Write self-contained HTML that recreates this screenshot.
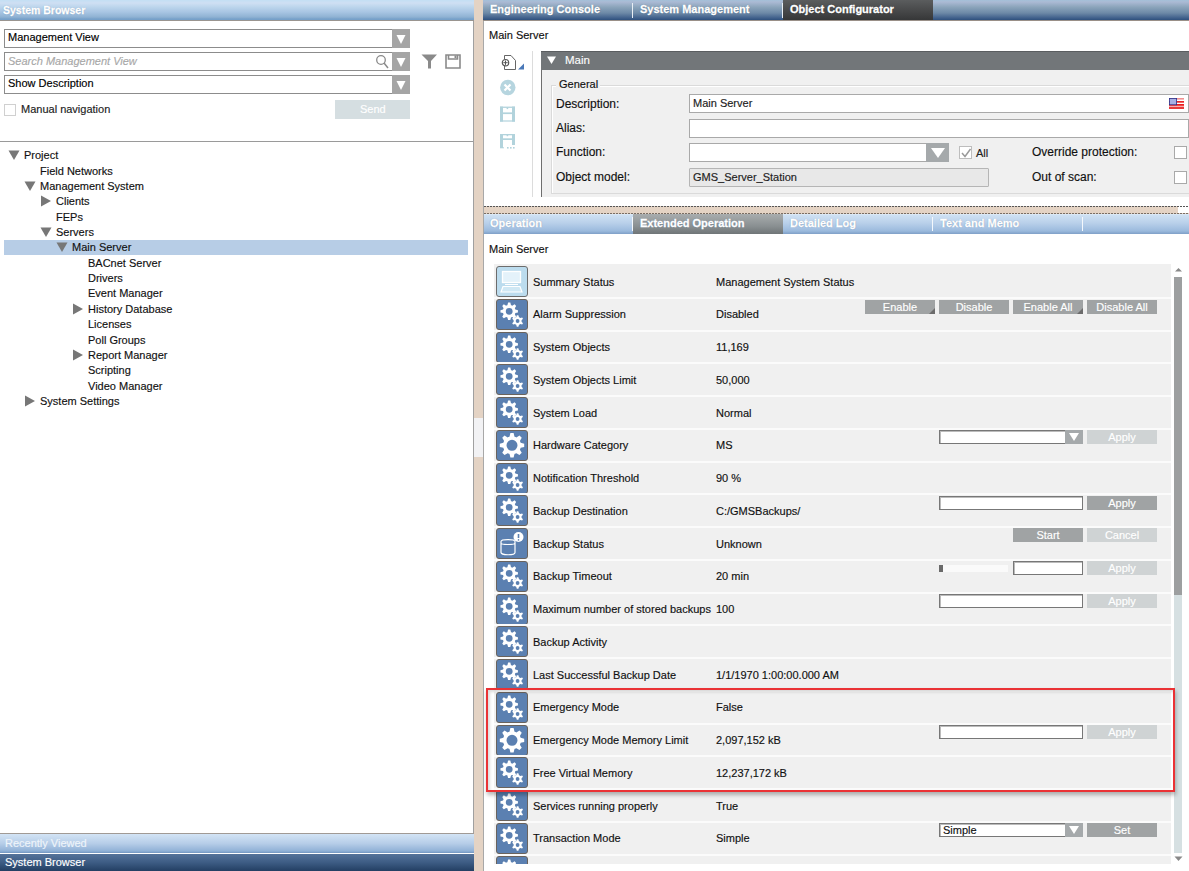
<!DOCTYPE html><html><head><meta charset="utf-8"><style>
html,body{margin:0;padding:0;}
body{width:1189px;height:871px;position:relative;overflow:hidden;background:#fff;font-family:"Liberation Sans",sans-serif;}
.t{position:absolute;white-space:nowrap;-webkit-text-stroke:0.15px currentColor;}
.r{position:absolute;box-sizing:border-box;}

</style></head><body>
<div class="r" style="left:0px;top:0px;width:474px;height:20px;background:linear-gradient(#c3dff4 0px,#cfdff3 3px,#bcd5ec 7px,#a8c5e3 12px,#8fb2d3 17px,#76a0c9 19px);"></div>
<div class="r" style="left:0px;top:20px;width:474px;height:1px;background:#9a9590;"></div>
<div class="t" style="left:3px;top:4.50px;font-size:10.5px;line-height:11.73px;color:#fff;font-weight:bold;font-style:normal;-webkit-text-stroke:0.3px #fff;text-shadow:0 0 1px #5d7fa5;">System Browser</div>
<div class="r" style="left:473px;top:21px;width:1px;height:850px;background:#a0a0a0;"></div>
<div class="r" style="left:4px;top:29px;width:406px;height:19px;border:1px solid #8c8c8c;border-right:none;background:#fff;"></div>
<div class="r" style="left:392px;top:29px;width:18px;height:19px;background:#a5a5a5;"></div>
<svg style="position:absolute;left:395.0px;top:33.5px" width="12" height="11"><path d="M1.5,1 L10.5,1 L6,10Z" fill="#fff"/></svg>
<div class="t" style="left:8px;top:31.05px;font-size:11px;line-height:12.29px;color:#000;font-weight:normal;font-style:normal;">Management View</div>
<div class="r" style="left:4px;top:52px;width:406px;height:19px;border:1px solid #8c8c8c;border-right:none;background:#fff;"></div>
<div class="r" style="left:392px;top:52px;width:18px;height:19px;background:#a5a5a5;"></div>
<svg style="position:absolute;left:395.0px;top:56.5px" width="12" height="11"><path d="M1.5,1 L10.5,1 L6,10Z" fill="#fff"/></svg>
<div class="t" style="left:8px;top:55.25px;font-size:11px;line-height:12.29px;color:#a8a8a8;font-weight:normal;font-style:italic;">Search Management View</div>
<div class="r" style="left:4px;top:75px;width:406px;height:19px;border:1px solid #8c8c8c;border-right:none;background:#fff;"></div>
<div class="r" style="left:392px;top:75px;width:18px;height:19px;background:#a5a5a5;"></div>
<svg style="position:absolute;left:395.0px;top:79.5px" width="12" height="11"><path d="M1.5,1 L10.5,1 L6,10Z" fill="#fff"/></svg>
<div class="t" style="left:8px;top:77.05px;font-size:11px;line-height:12.29px;color:#000;font-weight:normal;font-style:normal;">Show Description</div>
<svg style="position:absolute;left:375px;top:54px" width="15" height="16"><circle cx="6" cy="6" r="4.3" fill="none" stroke="#8a8a8a" stroke-width="1.3"/><path d="M9,9 L13,14" stroke="#8a8a8a" stroke-width="1.5"/></svg>
<svg style="position:absolute;left:421px;top:54px" width="17" height="15"><path d="M0.5,0.5 L16,0.5 L10,7 L10,14.5 L7,14.5 L7,7Z" fill="#8a8a8a"/></svg>
<svg style="position:absolute;left:445px;top:54px" width="17" height="15"><path d="M1,1 H15 V14 H1Z M3.5,1 V5 H12.5 V1" fill="none" stroke="#8a8a8a" stroke-width="1.6"/><rect x="9.5" y="1.5" width="2" height="2.5" fill="#8a8a8a"/></svg>
<div class="r" style="left:4px;top:104px;width:12px;height:12px;border:1px solid #d0d0d0;background:#fff;"></div>
<div class="t" style="left:21px;top:102.75px;font-size:11px;line-height:12.29px;color:#222;font-weight:normal;font-style:normal;">Manual navigation</div>
<div class="r" style="left:335px;top:100px;width:75px;height:19px;background:#d5dee1;"></div>
<div class="t" style="left:360px;top:103.05px;font-size:11px;line-height:12.29px;color:#fff;font-weight:normal;font-style:normal;">Send</div>
<div class="r" style="left:0px;top:141px;width:473px;height:1px;background:#9a9a9a;"></div>
<svg style="position:absolute;left:8px;top:149.1px" width="12" height="12"><path d="M0.5,1.5 L11.5,1.5 L6,11Z" fill="#777"/></svg>
<div class="t" style="left:24px;top:149.14px;font-size:11px;line-height:12.29px;color:#111;font-weight:normal;font-style:normal;">Project</div>
<div class="t" style="left:40px;top:164.51px;font-size:11px;line-height:12.29px;color:#111;font-weight:normal;font-style:normal;">Field Networks</div>
<svg style="position:absolute;left:24px;top:179.8px" width="12" height="12"><path d="M0.5,1.5 L11.5,1.5 L6,11Z" fill="#777"/></svg>
<div class="t" style="left:40px;top:179.88px;font-size:11px;line-height:12.29px;color:#111;font-weight:normal;font-style:normal;">Management System</div>
<svg style="position:absolute;left:40px;top:195.2px" width="12" height="12"><path d="M1,0.5 L1,11.5 L11,6Z" fill="#777"/></svg>
<div class="t" style="left:56px;top:195.25px;font-size:11px;line-height:12.29px;color:#111;font-weight:normal;font-style:normal;">Clients</div>
<div class="t" style="left:56px;top:210.62px;font-size:11px;line-height:12.29px;color:#111;font-weight:normal;font-style:normal;">FEPs</div>
<svg style="position:absolute;left:40px;top:225.9px" width="12" height="12"><path d="M0.5,1.5 L11.5,1.5 L6,11Z" fill="#777"/></svg>
<div class="t" style="left:56px;top:225.99px;font-size:11px;line-height:12.29px;color:#111;font-weight:normal;font-style:normal;">Servers</div>
<div class="r" style="left:4px;top:240px;width:464px;height:15px;background:#b7cde6;"></div>
<svg style="position:absolute;left:56px;top:241.3px" width="12" height="12"><path d="M0.5,1.5 L11.5,1.5 L6,11Z" fill="#777"/></svg>
<div class="t" style="left:72px;top:241.36px;font-size:11px;line-height:12.29px;color:#111;font-weight:normal;font-style:normal;">Main Server</div>
<div class="t" style="left:88px;top:256.74px;font-size:11px;line-height:12.29px;color:#111;font-weight:normal;font-style:normal;">BACnet Server</div>
<div class="t" style="left:88px;top:272.11px;font-size:11px;line-height:12.29px;color:#111;font-weight:normal;font-style:normal;">Drivers</div>
<div class="t" style="left:88px;top:287.47px;font-size:11px;line-height:12.29px;color:#111;font-weight:normal;font-style:normal;">Event Manager</div>
<svg style="position:absolute;left:72px;top:302.8px" width="12" height="12"><path d="M1,0.5 L1,11.5 L11,6Z" fill="#777"/></svg>
<div class="t" style="left:88px;top:302.84px;font-size:11px;line-height:12.29px;color:#111;font-weight:normal;font-style:normal;">History Database</div>
<div class="t" style="left:88px;top:318.21px;font-size:11px;line-height:12.29px;color:#111;font-weight:normal;font-style:normal;">Licenses</div>
<div class="t" style="left:88px;top:333.58px;font-size:11px;line-height:12.29px;color:#111;font-weight:normal;font-style:normal;">Poll Groups</div>
<svg style="position:absolute;left:72px;top:348.9px" width="12" height="12"><path d="M1,0.5 L1,11.5 L11,6Z" fill="#777"/></svg>
<div class="t" style="left:88px;top:348.95px;font-size:11px;line-height:12.29px;color:#111;font-weight:normal;font-style:normal;">Report Manager</div>
<div class="t" style="left:88px;top:364.32px;font-size:11px;line-height:12.29px;color:#111;font-weight:normal;font-style:normal;">Scripting</div>
<div class="t" style="left:88px;top:379.69px;font-size:11px;line-height:12.29px;color:#111;font-weight:normal;font-style:normal;">Video Manager</div>
<svg style="position:absolute;left:24px;top:395.0px" width="12" height="12"><path d="M1,0.5 L1,11.5 L11,6Z" fill="#777"/></svg>
<div class="t" style="left:40px;top:395.06px;font-size:11px;line-height:12.29px;color:#111;font-weight:normal;font-style:normal;">System Settings</div>
<div class="r" style="left:0px;top:833px;width:474px;height:1px;background:#a09a95;"></div>
<div class="r" style="left:0px;top:834px;width:474px;height:19px;background:linear-gradient(#d3e4f5,#b6cde8 50%,#90b1d6 90%,#7195c0);"></div>
<div class="r" style="left:0px;top:853px;width:474px;height:1px;background:#fff;"></div>
<div class="r" style="left:0px;top:854px;width:474px;height:17px;background:linear-gradient(#55739a,#3d5c84 50%,#233f63);"></div>
<div class="t" style="left:5px;top:837.04px;font-size:11px;line-height:12.29px;color:#eef4fa;font-weight:normal;font-style:normal;">Recently Viewed</div>
<div class="t" style="left:5px;top:856.04px;font-size:11px;line-height:12.29px;color:#fff;font-weight:normal;font-style:normal;">System Browser</div>
<div class="r" style="left:474px;top:0px;width:9px;height:871px;background:#e4d3c4;"></div>
<div class="r" style="left:474px;top:418px;width:9px;height:39px;background:#f2f2f4;"></div>
<div class="r" style="left:483px;top:21px;width:1px;height:850px;background:#a8a8a8;"></div>
<div class="r" style="left:483px;top:0px;width:706px;height:20px;background:linear-gradient(#a3c0d9 0px,#abbad4 2px,#8ba4bb 7px,#6d89a7 13px,#40608b 18px,#2e507d 20px);"></div>
<div class="r" style="left:483px;top:20px;width:706px;height:1px;background:#9a9088;"></div>
<div class="r" style="left:783px;top:0px;width:150px;height:20px;background:linear-gradient(#5b5d5e,#454647 60%,#363738);"></div>
<div class="r" style="left:632px;top:3px;width:1px;height:15px;background:#e8eef4;"></div>
<div class="r" style="left:782px;top:3px;width:1px;height:15px;background:#e8eef4;"></div>
<div class="t" style="left:490px;top:3.04px;font-size:11px;line-height:12.29px;color:#fff;font-weight:bold;font-style:normal;-webkit-text-stroke:0.3px #fff;text-shadow:0 0 1px #2a4466;">Engineering Console</div>
<div class="t" style="left:640px;top:3.04px;font-size:11px;line-height:12.29px;color:#fff;font-weight:bold;font-style:normal;-webkit-text-stroke:0.3px #fff;text-shadow:0 0 1px #2a4466;">System Management</div>
<div class="t" style="left:790px;top:3.04px;font-size:11px;line-height:12.29px;color:#fff;font-weight:bold;font-style:normal;-webkit-text-stroke:0.3px #fff;text-shadow:0 0 1px #222;">Object Configurator</div>
<div class="t" style="left:489px;top:29.05px;font-size:11px;line-height:12.29px;color:#111;font-weight:normal;font-style:normal;">Main Server</div>
<svg style="position:absolute;left:496px;top:53px" width="30" height="18"><path d="M8.5,6 V2.5 H15 L19.5,7.5 V16.5 H8.5 V13" fill="none" stroke="#555" stroke-width="0.9"/><circle cx="9.5" cy="9.7" r="3.2" fill="#fff" stroke="#555" stroke-width="1.2"/><path d="M7.3,9.7 H11.7 M9.5,7.5 V11.9" stroke="#555" stroke-width="1"/><path d="M28,10.5 V16.5 H22Z" fill="#4a78b8"/></svg>
<svg style="position:absolute;left:499px;top:79px" width="18" height="18"><circle cx="8.8" cy="8.5" r="7.7" fill="#b6d5df"/><path d="M5.5,5.5 L11.5,11.5 M11.5,5.5 L5.5,11.5" stroke="#fff" stroke-width="2.2"/></svg>
<svg style="position:absolute;left:499px;top:106px" width="18" height="17" fill="#b2d3dc"><rect x="1" y="0.6" width="3" height="15" /><rect x="13" y="0.6" width="3" height="15"/><rect x="1" y="0.6" width="15" height="1.3"/><rect x="4" y="6.4" width="9" height="1.7"/><rect x="1" y="14.4" width="15" height="1.2"/><rect x="7.6" y="1.5" width="1.6" height="1.6"/></svg>
<svg style="position:absolute;left:499px;top:133px" width="18" height="17" fill="#b2d3dc"><rect x="1" y="1" width="3" height="14" /><rect x="13" y="1" width="3" height="11"/><rect x="1" y="1" width="15" height="1.3"/><rect x="4" y="5.3" width="9" height="1.7"/><rect x="1" y="14.3" width="4" height="1"/><rect x="8" y="14" width="1.6" height="1.6"/><rect x="11" y="14" width="1.6" height="1.6"/><rect x="14" y="14" width="1.6" height="1.6"/><rect x="7.6" y="1.8" width="1.6" height="1.4"/></svg>
<div class="r" style="left:532px;top:51px;width:1px;height:154px;background:#dcdcdc;"></div>
<div class="r" style="left:541px;top:51px;width:648px;height:19px;background:#727679;border-top:1px solid #5a5d60;"></div>
<svg style="position:absolute;left:546px;top:55px" width="12" height="11"><path d="M1,1.5 L10,1.5 L5.5,9Z" fill="#fff"/></svg>
<div class="t" style="left:565px;top:53.59px;font-size:11.5px;line-height:12.85px;color:#fbfbfb;font-weight:normal;font-style:normal;">Main</div>
<div class="r" style="left:541px;top:70px;width:648px;height:127px;background:#f0f0f0;border-left:1px solid #6e6e6e;"></div>
<div class="r" style="left:551px;top:85px;width:640px;height:109px;border:1px solid #dadada;border-right:none;box-shadow:inset 1px 1px 0 #fff;"></div>
<div class="r" style="left:556px;top:79px;width:44px;height:10px;background:#f0f0f0;"></div>
<div class="t" style="left:559px;top:78.34px;font-size:11px;line-height:12.29px;color:#111;font-weight:normal;font-style:normal;">General</div>
<div class="t" style="left:556px;top:97.84px;font-size:12px;line-height:13.40px;color:#111;font-weight:normal;font-style:normal;">Description:</div>
<div class="t" style="left:556px;top:121.84px;font-size:12px;line-height:13.40px;color:#111;font-weight:normal;font-style:normal;">Alias:</div>
<div class="t" style="left:556px;top:145.84px;font-size:12px;line-height:13.40px;color:#111;font-weight:normal;font-style:normal;">Function:</div>
<div class="t" style="left:556px;top:170.84px;font-size:12px;line-height:13.40px;color:#111;font-weight:normal;font-style:normal;">Object model:</div>
<div class="r" style="left:689px;top:94px;width:500px;height:19px;background:#fff;border:1px solid #a9a9a9;"></div>
<div class="t" style="left:693px;top:97.05px;font-size:11px;line-height:12.29px;color:#222;font-weight:normal;font-style:normal;">Main Server</div>
<div class="r" style="left:689px;top:119px;width:500px;height:19px;background:#fff;border:1px solid #a9a9a9;"></div>
<div class="r" style="left:689px;top:143px;width:260px;height:19px;background:#fff;border:1px solid #a9a9a9;"></div>
<div class="r" style="left:926px;top:143px;width:23px;height:19px;background:#a5a9ab;"></div>
<svg style="position:absolute;left:930px;top:147px" width="16" height="12"><path d="M1,1 L15,1 L8,11Z" fill="#fff"/></svg>
<div class="r" style="left:959px;top:146px;width:13px;height:13px;background:#fff;border:1px solid #bdbdbd;"></div>
<svg style="position:absolute;left:960px;top:147px" width="12" height="12"><path d="M2,6 L5,9.5 L10.5,2" fill="none" stroke="#9a9a9a" stroke-width="1.5"/></svg>
<div class="t" style="left:976px;top:147.04px;font-size:11px;line-height:12.29px;color:#222;font-weight:normal;font-style:normal;">All</div>
<div class="r" style="left:689px;top:168px;width:300px;height:19px;background:#e8e8e8;border:1px solid #b5b5b5;border-radius:1px;"></div>
<div class="t" style="left:693px;top:171.04px;font-size:11px;line-height:12.29px;color:#222;font-weight:normal;font-style:normal;">GMS_Server_Station</div>
<div class="t" style="left:1032px;top:145.94px;font-size:12px;line-height:13.40px;color:#111;font-weight:normal;font-style:normal;">Override protection:</div>
<div class="t" style="left:1032px;top:170.64px;font-size:12px;line-height:13.40px;color:#111;font-weight:normal;font-style:normal;">Out of scan:</div>
<div class="r" style="left:1174px;top:146px;width:13px;height:13px;background:#fff;border:1px solid #a9a9a9;"></div>
<div class="r" style="left:1174px;top:171px;width:13px;height:13px;background:#fff;border:1px solid #a9a9a9;"></div>
<svg style="position:absolute;left:1169px;top:98px" width="15" height="11"><rect x="0" y="0" width="15" height="11" fill="#fff"/><rect x="0" y="0" width="15" height="1.6" fill="#f09090"/><rect x="0" y="3" width="15" height="1.7" fill="#e82828"/><rect x="0" y="6" width="15" height="1.8" fill="#ee1c1c"/><rect x="0" y="8.6" width="15" height="2.4" fill="#e83a3a"/><rect x="0.4" y="0.4" width="7.2" height="6.4" fill="#a7b0e4" stroke="#28308a" stroke-width="0.8"/></svg>
<div class="r" style="left:484px;top:197px;width:705px;height:9px;background:#fff;"></div>
<div class="r" style="left:484px;top:206px;width:705px;height:8px;background:#e4d3c4;"></div>
<div class="r" style="left:1178px;top:206px;width:11px;height:7px;background:#fff;"></div>
<div class="r" style="left:484px;top:206px;width:705px;height:1px;background:repeating-linear-gradient(90deg,#555 0 2px,transparent 2px 3px);"></div>
<div class="r" style="left:484px;top:213px;width:705px;height:1px;background:repeating-linear-gradient(90deg,#7a6e64 0 2px,transparent 2px 3px);"></div>
<div class="r" style="left:484px;top:214px;width:705px;height:20px;background:linear-gradient(#e4eef8 0px,#cfe1f3 1px,#b9d0ea 45%,#9bbadd 85%,#7e9fc7);"></div>
<div class="r" style="left:633px;top:214px;width:150px;height:20px;background:linear-gradient(#a9adae,#8a9092 60%,#6f7577);"></div>
<div class="r" style="left:632px;top:217px;width:1px;height:14px;background:#f4f8fc;"></div>
<div class="r" style="left:932px;top:217px;width:1px;height:14px;background:#f4f8fc;"></div>
<div class="r" style="left:1082px;top:217px;width:1px;height:14px;background:#f4f8fc;"></div>
<div class="t" style="left:490px;top:217.04px;font-size:11px;line-height:12.29px;color:#fff;font-weight:bold;font-style:normal;-webkit-text-stroke:0.3px #fff;text-shadow:0 0 1px #4a6a93;">Operation</div>
<div class="t" style="left:640px;top:217.04px;font-size:11px;line-height:12.29px;color:#fff;font-weight:bold;font-style:normal;-webkit-text-stroke:0.3px #fff;text-shadow:0 0 1px #4a6a93;">Extended Operation</div>
<div class="t" style="left:790px;top:217.04px;font-size:11px;line-height:12.29px;color:#fff;font-weight:bold;font-style:normal;-webkit-text-stroke:0.3px #fff;text-shadow:0 0 1px #4a6a93;">Detailed Log</div>
<div class="t" style="left:940px;top:217.04px;font-size:11px;line-height:12.29px;color:#fff;font-weight:bold;font-style:normal;-webkit-text-stroke:0.3px #fff;text-shadow:0 0 1px #4a6a93;">Text and Memo</div>
<div class="t" style="left:489px;top:243.04px;font-size:11px;line-height:12.29px;color:#111;font-weight:normal;font-style:normal;">Main Server</div>
<div class="r" style="left:494px;top:264px;width:677px;height:600px;background:#f0f0f0;"></div>
<svg style="position:absolute;left:496px;top:266.1px" width="33" height="31"><rect x="0.5" y="0.5" width="31" height="30" rx="2.5" fill="#bcdcee" stroke="#6c6c6c"/><rect x="6.5" y="5.5" width="18" height="11" fill="#e4f2fa" stroke="#fff" stroke-width="1.3"/><path d="M9,18.5 H22" stroke="#fff" stroke-width="1"/><path d="M7,20.5 H24 L26,26 H5Z" fill="#d0e8f4" stroke="#fff" stroke-width="1.2"/></svg>
<div class="t" style="left:533px;top:275.55px;font-size:11px;line-height:12.29px;color:#111;font-weight:normal;font-style:normal;">Summary Status</div>
<div class="t" style="left:716px;top:275.55px;font-size:11px;line-height:12.29px;color:#111;font-weight:normal;font-style:normal;">Management System Status</div>
<div class="r" style="left:494px;top:297px;width:677px;height:2px;background:#fbfbfb;"></div>
<svg style="position:absolute;left:496px;top:298.85px" width="33" height="31"><rect x="0.5" y="0.5" width="31" height="30" rx="2.5" fill="#5b80b1" stroke="#6a635d"/><path d="M19.34,10.50 L21.93,11.20 L21.93,13.40 L19.34,14.10 L19.26,14.36 L19.16,14.62 L19.06,14.88 L18.94,15.13 L18.82,15.37 L20.15,17.70 L18.60,19.25 L16.27,17.92 L16.03,18.04 L15.78,18.16 L15.52,18.26 L15.26,18.36 L15.00,18.44 L14.30,21.03 L12.10,21.03 L11.40,18.44 L11.14,18.36 L10.88,18.26 L10.62,18.16 L10.37,18.04 L10.13,17.92 L7.80,19.25 L6.25,17.70 L7.58,15.37 L7.46,15.13 L7.34,14.88 L7.24,14.62 L7.14,14.36 L7.06,14.10 L4.47,13.40 L4.47,11.20 L7.06,10.50 L7.14,10.24 L7.24,9.98 L7.34,9.72 L7.46,9.47 L7.58,9.23 L6.25,6.90 L7.80,5.35 L10.13,6.68 L10.37,6.56 L10.62,6.44 L10.88,6.34 L11.14,6.24 L11.40,6.16 L12.10,3.57 L14.30,3.57 L15.00,6.16 L15.26,6.24 L15.52,6.34 L15.78,6.44 L16.03,6.56 L16.27,6.68 L18.60,5.35 L20.15,6.90 L18.82,9.23 L18.94,9.47 L19.06,9.72 L19.16,9.98 L19.26,10.24Z M16.60,12.30 A3.4,3.4 0 1,0 9.80,12.30 A3.4,3.4 0 1,0 16.60,12.30Z M23.00,25.75 L22.40,27.74 L20.80,27.74 L20.20,25.75 L19.95,25.65 L19.72,25.53 L19.49,25.40 L19.27,25.25 L19.06,25.09 L17.03,25.57 L16.23,24.18 L17.66,22.66 L17.62,22.40 L17.60,22.13 L17.60,21.87 L17.62,21.60 L17.66,21.34 L16.23,19.82 L17.03,18.43 L19.06,18.91 L19.27,18.75 L19.49,18.60 L19.72,18.47 L19.95,18.35 L20.20,18.25 L20.80,16.26 L22.40,16.26 L23.00,18.25 L23.25,18.35 L23.48,18.47 L23.71,18.60 L23.93,18.75 L24.14,18.91 L26.17,18.43 L26.97,19.82 L25.54,21.34 L25.58,21.60 L25.60,21.87 L25.60,22.13 L25.58,22.40 L25.54,22.66 L26.97,24.18 L26.17,25.57 L24.14,25.09 L23.93,25.25 L23.71,25.40 L23.48,25.53 L23.25,25.65Z M23.50,22.00 A1.9,1.9 0 1,0 19.70,22.00 A1.9,1.9 0 1,0 23.50,22.00Z" fill="#fff" fill-rule="evenodd"/></svg>
<div class="t" style="left:533px;top:308.30px;font-size:11px;line-height:12.29px;color:#111;font-weight:normal;font-style:normal;">Alarm Suppression</div>
<div class="t" style="left:716px;top:308.30px;font-size:11px;line-height:12.29px;color:#111;font-weight:normal;font-style:normal;">Disabled</div>
<div class="r" style="left:494px;top:330px;width:677px;height:2px;background:#fbfbfb;"></div>
<svg style="position:absolute;left:496px;top:331.6px" width="33" height="31"><rect x="0.5" y="0.5" width="31" height="30" rx="2.5" fill="#5b80b1" stroke="#6a635d"/><path d="M19.34,10.50 L21.93,11.20 L21.93,13.40 L19.34,14.10 L19.26,14.36 L19.16,14.62 L19.06,14.88 L18.94,15.13 L18.82,15.37 L20.15,17.70 L18.60,19.25 L16.27,17.92 L16.03,18.04 L15.78,18.16 L15.52,18.26 L15.26,18.36 L15.00,18.44 L14.30,21.03 L12.10,21.03 L11.40,18.44 L11.14,18.36 L10.88,18.26 L10.62,18.16 L10.37,18.04 L10.13,17.92 L7.80,19.25 L6.25,17.70 L7.58,15.37 L7.46,15.13 L7.34,14.88 L7.24,14.62 L7.14,14.36 L7.06,14.10 L4.47,13.40 L4.47,11.20 L7.06,10.50 L7.14,10.24 L7.24,9.98 L7.34,9.72 L7.46,9.47 L7.58,9.23 L6.25,6.90 L7.80,5.35 L10.13,6.68 L10.37,6.56 L10.62,6.44 L10.88,6.34 L11.14,6.24 L11.40,6.16 L12.10,3.57 L14.30,3.57 L15.00,6.16 L15.26,6.24 L15.52,6.34 L15.78,6.44 L16.03,6.56 L16.27,6.68 L18.60,5.35 L20.15,6.90 L18.82,9.23 L18.94,9.47 L19.06,9.72 L19.16,9.98 L19.26,10.24Z M16.60,12.30 A3.4,3.4 0 1,0 9.80,12.30 A3.4,3.4 0 1,0 16.60,12.30Z M23.00,25.75 L22.40,27.74 L20.80,27.74 L20.20,25.75 L19.95,25.65 L19.72,25.53 L19.49,25.40 L19.27,25.25 L19.06,25.09 L17.03,25.57 L16.23,24.18 L17.66,22.66 L17.62,22.40 L17.60,22.13 L17.60,21.87 L17.62,21.60 L17.66,21.34 L16.23,19.82 L17.03,18.43 L19.06,18.91 L19.27,18.75 L19.49,18.60 L19.72,18.47 L19.95,18.35 L20.20,18.25 L20.80,16.26 L22.40,16.26 L23.00,18.25 L23.25,18.35 L23.48,18.47 L23.71,18.60 L23.93,18.75 L24.14,18.91 L26.17,18.43 L26.97,19.82 L25.54,21.34 L25.58,21.60 L25.60,21.87 L25.60,22.13 L25.58,22.40 L25.54,22.66 L26.97,24.18 L26.17,25.57 L24.14,25.09 L23.93,25.25 L23.71,25.40 L23.48,25.53 L23.25,25.65Z M23.50,22.00 A1.9,1.9 0 1,0 19.70,22.00 A1.9,1.9 0 1,0 23.50,22.00Z" fill="#fff" fill-rule="evenodd"/></svg>
<div class="t" style="left:533px;top:341.05px;font-size:11px;line-height:12.29px;color:#111;font-weight:normal;font-style:normal;">System Objects</div>
<div class="t" style="left:716px;top:341.05px;font-size:11px;line-height:12.29px;color:#111;font-weight:normal;font-style:normal;">11,169</div>
<div class="r" style="left:494px;top:362px;width:677px;height:2px;background:#fbfbfb;"></div>
<svg style="position:absolute;left:496px;top:364.35px" width="33" height="31"><rect x="0.5" y="0.5" width="31" height="30" rx="2.5" fill="#5b80b1" stroke="#6a635d"/><path d="M19.34,10.50 L21.93,11.20 L21.93,13.40 L19.34,14.10 L19.26,14.36 L19.16,14.62 L19.06,14.88 L18.94,15.13 L18.82,15.37 L20.15,17.70 L18.60,19.25 L16.27,17.92 L16.03,18.04 L15.78,18.16 L15.52,18.26 L15.26,18.36 L15.00,18.44 L14.30,21.03 L12.10,21.03 L11.40,18.44 L11.14,18.36 L10.88,18.26 L10.62,18.16 L10.37,18.04 L10.13,17.92 L7.80,19.25 L6.25,17.70 L7.58,15.37 L7.46,15.13 L7.34,14.88 L7.24,14.62 L7.14,14.36 L7.06,14.10 L4.47,13.40 L4.47,11.20 L7.06,10.50 L7.14,10.24 L7.24,9.98 L7.34,9.72 L7.46,9.47 L7.58,9.23 L6.25,6.90 L7.80,5.35 L10.13,6.68 L10.37,6.56 L10.62,6.44 L10.88,6.34 L11.14,6.24 L11.40,6.16 L12.10,3.57 L14.30,3.57 L15.00,6.16 L15.26,6.24 L15.52,6.34 L15.78,6.44 L16.03,6.56 L16.27,6.68 L18.60,5.35 L20.15,6.90 L18.82,9.23 L18.94,9.47 L19.06,9.72 L19.16,9.98 L19.26,10.24Z M16.60,12.30 A3.4,3.4 0 1,0 9.80,12.30 A3.4,3.4 0 1,0 16.60,12.30Z M23.00,25.75 L22.40,27.74 L20.80,27.74 L20.20,25.75 L19.95,25.65 L19.72,25.53 L19.49,25.40 L19.27,25.25 L19.06,25.09 L17.03,25.57 L16.23,24.18 L17.66,22.66 L17.62,22.40 L17.60,22.13 L17.60,21.87 L17.62,21.60 L17.66,21.34 L16.23,19.82 L17.03,18.43 L19.06,18.91 L19.27,18.75 L19.49,18.60 L19.72,18.47 L19.95,18.35 L20.20,18.25 L20.80,16.26 L22.40,16.26 L23.00,18.25 L23.25,18.35 L23.48,18.47 L23.71,18.60 L23.93,18.75 L24.14,18.91 L26.17,18.43 L26.97,19.82 L25.54,21.34 L25.58,21.60 L25.60,21.87 L25.60,22.13 L25.58,22.40 L25.54,22.66 L26.97,24.18 L26.17,25.57 L24.14,25.09 L23.93,25.25 L23.71,25.40 L23.48,25.53 L23.25,25.65Z M23.50,22.00 A1.9,1.9 0 1,0 19.70,22.00 A1.9,1.9 0 1,0 23.50,22.00Z" fill="#fff" fill-rule="evenodd"/></svg>
<div class="t" style="left:533px;top:373.80px;font-size:11px;line-height:12.29px;color:#111;font-weight:normal;font-style:normal;">System Objects Limit</div>
<div class="t" style="left:716px;top:373.80px;font-size:11px;line-height:12.29px;color:#111;font-weight:normal;font-style:normal;">50,000</div>
<div class="r" style="left:494px;top:395px;width:677px;height:2px;background:#fbfbfb;"></div>
<svg style="position:absolute;left:496px;top:397.1px" width="33" height="31"><rect x="0.5" y="0.5" width="31" height="30" rx="2.5" fill="#5b80b1" stroke="#6a635d"/><path d="M19.34,10.50 L21.93,11.20 L21.93,13.40 L19.34,14.10 L19.26,14.36 L19.16,14.62 L19.06,14.88 L18.94,15.13 L18.82,15.37 L20.15,17.70 L18.60,19.25 L16.27,17.92 L16.03,18.04 L15.78,18.16 L15.52,18.26 L15.26,18.36 L15.00,18.44 L14.30,21.03 L12.10,21.03 L11.40,18.44 L11.14,18.36 L10.88,18.26 L10.62,18.16 L10.37,18.04 L10.13,17.92 L7.80,19.25 L6.25,17.70 L7.58,15.37 L7.46,15.13 L7.34,14.88 L7.24,14.62 L7.14,14.36 L7.06,14.10 L4.47,13.40 L4.47,11.20 L7.06,10.50 L7.14,10.24 L7.24,9.98 L7.34,9.72 L7.46,9.47 L7.58,9.23 L6.25,6.90 L7.80,5.35 L10.13,6.68 L10.37,6.56 L10.62,6.44 L10.88,6.34 L11.14,6.24 L11.40,6.16 L12.10,3.57 L14.30,3.57 L15.00,6.16 L15.26,6.24 L15.52,6.34 L15.78,6.44 L16.03,6.56 L16.27,6.68 L18.60,5.35 L20.15,6.90 L18.82,9.23 L18.94,9.47 L19.06,9.72 L19.16,9.98 L19.26,10.24Z M16.60,12.30 A3.4,3.4 0 1,0 9.80,12.30 A3.4,3.4 0 1,0 16.60,12.30Z M23.00,25.75 L22.40,27.74 L20.80,27.74 L20.20,25.75 L19.95,25.65 L19.72,25.53 L19.49,25.40 L19.27,25.25 L19.06,25.09 L17.03,25.57 L16.23,24.18 L17.66,22.66 L17.62,22.40 L17.60,22.13 L17.60,21.87 L17.62,21.60 L17.66,21.34 L16.23,19.82 L17.03,18.43 L19.06,18.91 L19.27,18.75 L19.49,18.60 L19.72,18.47 L19.95,18.35 L20.20,18.25 L20.80,16.26 L22.40,16.26 L23.00,18.25 L23.25,18.35 L23.48,18.47 L23.71,18.60 L23.93,18.75 L24.14,18.91 L26.17,18.43 L26.97,19.82 L25.54,21.34 L25.58,21.60 L25.60,21.87 L25.60,22.13 L25.58,22.40 L25.54,22.66 L26.97,24.18 L26.17,25.57 L24.14,25.09 L23.93,25.25 L23.71,25.40 L23.48,25.53 L23.25,25.65Z M23.50,22.00 A1.9,1.9 0 1,0 19.70,22.00 A1.9,1.9 0 1,0 23.50,22.00Z" fill="#fff" fill-rule="evenodd"/></svg>
<div class="t" style="left:533px;top:406.55px;font-size:11px;line-height:12.29px;color:#111;font-weight:normal;font-style:normal;">System Load</div>
<div class="t" style="left:716px;top:406.55px;font-size:11px;line-height:12.29px;color:#111;font-weight:normal;font-style:normal;">Normal</div>
<div class="r" style="left:494px;top:428px;width:677px;height:2px;background:#fbfbfb;"></div>
<svg style="position:absolute;left:496px;top:429.85px" width="33" height="31"><rect x="0.5" y="0.5" width="31" height="30" rx="2.5" fill="#5b80b1" stroke="#6a635d"/><path d="M24.65,12.80 L28.20,13.70 L28.20,16.90 L24.65,17.80 L24.53,18.18 L24.39,18.56 L24.24,18.93 L24.07,19.29 L23.88,19.65 L25.75,22.79 L23.49,25.05 L20.35,23.18 L19.99,23.37 L19.63,23.54 L19.26,23.69 L18.88,23.83 L18.50,23.95 L17.60,27.50 L14.40,27.50 L13.50,23.95 L13.12,23.83 L12.74,23.69 L12.37,23.54 L12.01,23.37 L11.65,23.18 L8.51,25.05 L6.25,22.79 L8.12,19.65 L7.93,19.29 L7.76,18.93 L7.61,18.56 L7.47,18.18 L7.35,17.80 L3.80,16.90 L3.80,13.70 L7.35,12.80 L7.47,12.42 L7.61,12.04 L7.76,11.67 L7.93,11.31 L8.12,10.95 L6.25,7.81 L8.51,5.55 L11.65,7.42 L12.01,7.23 L12.37,7.06 L12.74,6.91 L13.12,6.77 L13.50,6.65 L14.40,3.10 L17.60,3.10 L18.50,6.65 L18.88,6.77 L19.26,6.91 L19.63,7.06 L19.99,7.23 L20.35,7.42 L23.49,5.55 L25.75,7.81 L23.88,10.95 L24.07,11.31 L24.24,11.67 L24.39,12.04 L24.53,12.42Z M21.50,15.30 A5.5,5.5 0 1,0 10.50,15.30 A5.5,5.5 0 1,0 21.50,15.30Z" fill="#fff" fill-rule="evenodd"/></svg>
<div class="t" style="left:533px;top:439.30px;font-size:11px;line-height:12.29px;color:#111;font-weight:normal;font-style:normal;">Hardware Category</div>
<div class="t" style="left:716px;top:439.30px;font-size:11px;line-height:12.29px;color:#111;font-weight:normal;font-style:normal;">MS</div>
<div class="r" style="left:494px;top:461px;width:677px;height:2px;background:#fbfbfb;"></div>
<svg style="position:absolute;left:496px;top:462.6px" width="33" height="31"><rect x="0.5" y="0.5" width="31" height="30" rx="2.5" fill="#5b80b1" stroke="#6a635d"/><path d="M19.34,10.50 L21.93,11.20 L21.93,13.40 L19.34,14.10 L19.26,14.36 L19.16,14.62 L19.06,14.88 L18.94,15.13 L18.82,15.37 L20.15,17.70 L18.60,19.25 L16.27,17.92 L16.03,18.04 L15.78,18.16 L15.52,18.26 L15.26,18.36 L15.00,18.44 L14.30,21.03 L12.10,21.03 L11.40,18.44 L11.14,18.36 L10.88,18.26 L10.62,18.16 L10.37,18.04 L10.13,17.92 L7.80,19.25 L6.25,17.70 L7.58,15.37 L7.46,15.13 L7.34,14.88 L7.24,14.62 L7.14,14.36 L7.06,14.10 L4.47,13.40 L4.47,11.20 L7.06,10.50 L7.14,10.24 L7.24,9.98 L7.34,9.72 L7.46,9.47 L7.58,9.23 L6.25,6.90 L7.80,5.35 L10.13,6.68 L10.37,6.56 L10.62,6.44 L10.88,6.34 L11.14,6.24 L11.40,6.16 L12.10,3.57 L14.30,3.57 L15.00,6.16 L15.26,6.24 L15.52,6.34 L15.78,6.44 L16.03,6.56 L16.27,6.68 L18.60,5.35 L20.15,6.90 L18.82,9.23 L18.94,9.47 L19.06,9.72 L19.16,9.98 L19.26,10.24Z M16.60,12.30 A3.4,3.4 0 1,0 9.80,12.30 A3.4,3.4 0 1,0 16.60,12.30Z M23.00,25.75 L22.40,27.74 L20.80,27.74 L20.20,25.75 L19.95,25.65 L19.72,25.53 L19.49,25.40 L19.27,25.25 L19.06,25.09 L17.03,25.57 L16.23,24.18 L17.66,22.66 L17.62,22.40 L17.60,22.13 L17.60,21.87 L17.62,21.60 L17.66,21.34 L16.23,19.82 L17.03,18.43 L19.06,18.91 L19.27,18.75 L19.49,18.60 L19.72,18.47 L19.95,18.35 L20.20,18.25 L20.80,16.26 L22.40,16.26 L23.00,18.25 L23.25,18.35 L23.48,18.47 L23.71,18.60 L23.93,18.75 L24.14,18.91 L26.17,18.43 L26.97,19.82 L25.54,21.34 L25.58,21.60 L25.60,21.87 L25.60,22.13 L25.58,22.40 L25.54,22.66 L26.97,24.18 L26.17,25.57 L24.14,25.09 L23.93,25.25 L23.71,25.40 L23.48,25.53 L23.25,25.65Z M23.50,22.00 A1.9,1.9 0 1,0 19.70,22.00 A1.9,1.9 0 1,0 23.50,22.00Z" fill="#fff" fill-rule="evenodd"/></svg>
<div class="t" style="left:533px;top:472.05px;font-size:11px;line-height:12.29px;color:#111;font-weight:normal;font-style:normal;">Notification Threshold</div>
<div class="t" style="left:716px;top:472.05px;font-size:11px;line-height:12.29px;color:#111;font-weight:normal;font-style:normal;">90 %</div>
<div class="r" style="left:494px;top:493px;width:677px;height:2px;background:#fbfbfb;"></div>
<svg style="position:absolute;left:496px;top:495.35px" width="33" height="31"><rect x="0.5" y="0.5" width="31" height="30" rx="2.5" fill="#5b80b1" stroke="#6a635d"/><path d="M19.34,10.50 L21.93,11.20 L21.93,13.40 L19.34,14.10 L19.26,14.36 L19.16,14.62 L19.06,14.88 L18.94,15.13 L18.82,15.37 L20.15,17.70 L18.60,19.25 L16.27,17.92 L16.03,18.04 L15.78,18.16 L15.52,18.26 L15.26,18.36 L15.00,18.44 L14.30,21.03 L12.10,21.03 L11.40,18.44 L11.14,18.36 L10.88,18.26 L10.62,18.16 L10.37,18.04 L10.13,17.92 L7.80,19.25 L6.25,17.70 L7.58,15.37 L7.46,15.13 L7.34,14.88 L7.24,14.62 L7.14,14.36 L7.06,14.10 L4.47,13.40 L4.47,11.20 L7.06,10.50 L7.14,10.24 L7.24,9.98 L7.34,9.72 L7.46,9.47 L7.58,9.23 L6.25,6.90 L7.80,5.35 L10.13,6.68 L10.37,6.56 L10.62,6.44 L10.88,6.34 L11.14,6.24 L11.40,6.16 L12.10,3.57 L14.30,3.57 L15.00,6.16 L15.26,6.24 L15.52,6.34 L15.78,6.44 L16.03,6.56 L16.27,6.68 L18.60,5.35 L20.15,6.90 L18.82,9.23 L18.94,9.47 L19.06,9.72 L19.16,9.98 L19.26,10.24Z M16.60,12.30 A3.4,3.4 0 1,0 9.80,12.30 A3.4,3.4 0 1,0 16.60,12.30Z M23.00,25.75 L22.40,27.74 L20.80,27.74 L20.20,25.75 L19.95,25.65 L19.72,25.53 L19.49,25.40 L19.27,25.25 L19.06,25.09 L17.03,25.57 L16.23,24.18 L17.66,22.66 L17.62,22.40 L17.60,22.13 L17.60,21.87 L17.62,21.60 L17.66,21.34 L16.23,19.82 L17.03,18.43 L19.06,18.91 L19.27,18.75 L19.49,18.60 L19.72,18.47 L19.95,18.35 L20.20,18.25 L20.80,16.26 L22.40,16.26 L23.00,18.25 L23.25,18.35 L23.48,18.47 L23.71,18.60 L23.93,18.75 L24.14,18.91 L26.17,18.43 L26.97,19.82 L25.54,21.34 L25.58,21.60 L25.60,21.87 L25.60,22.13 L25.58,22.40 L25.54,22.66 L26.97,24.18 L26.17,25.57 L24.14,25.09 L23.93,25.25 L23.71,25.40 L23.48,25.53 L23.25,25.65Z M23.50,22.00 A1.9,1.9 0 1,0 19.70,22.00 A1.9,1.9 0 1,0 23.50,22.00Z" fill="#fff" fill-rule="evenodd"/></svg>
<div class="t" style="left:533px;top:504.80px;font-size:11px;line-height:12.29px;color:#111;font-weight:normal;font-style:normal;">Backup Destination</div>
<div class="t" style="left:716px;top:504.80px;font-size:11px;line-height:12.29px;color:#111;font-weight:normal;font-style:normal;">C:/GMSBackups/</div>
<div class="r" style="left:494px;top:526px;width:677px;height:2px;background:#fbfbfb;"></div>
<svg style="position:absolute;left:496px;top:528.1px" width="33" height="31"><rect x="0.5" y="0.5" width="31" height="30" rx="2.5" fill="#5b80b1" stroke="#6a635d"/><path d="M5,13.5 C5,11 19,11 19,13.5 V24.5 C19,27.5 5,27.5 5,24.5Z M5,15 C5,17 19,17 19,15" fill="none" stroke="#fff" stroke-width="1.2"/><circle cx="22.5" cy="9" r="5" fill="#fff"/><path d="M22.5,6 V10" stroke="#5b80b1" stroke-width="1.6"/><circle cx="22.5" cy="11.9" r="0.8" fill="#5b80b1"/></svg>
<div class="t" style="left:533px;top:537.54px;font-size:11px;line-height:12.29px;color:#111;font-weight:normal;font-style:normal;">Backup Status</div>
<div class="t" style="left:716px;top:537.54px;font-size:11px;line-height:12.29px;color:#111;font-weight:normal;font-style:normal;">Unknown</div>
<div class="r" style="left:494px;top:559px;width:677px;height:2px;background:#fbfbfb;"></div>
<svg style="position:absolute;left:496px;top:560.85px" width="33" height="31"><rect x="0.5" y="0.5" width="31" height="30" rx="2.5" fill="#5b80b1" stroke="#6a635d"/><path d="M19.34,10.50 L21.93,11.20 L21.93,13.40 L19.34,14.10 L19.26,14.36 L19.16,14.62 L19.06,14.88 L18.94,15.13 L18.82,15.37 L20.15,17.70 L18.60,19.25 L16.27,17.92 L16.03,18.04 L15.78,18.16 L15.52,18.26 L15.26,18.36 L15.00,18.44 L14.30,21.03 L12.10,21.03 L11.40,18.44 L11.14,18.36 L10.88,18.26 L10.62,18.16 L10.37,18.04 L10.13,17.92 L7.80,19.25 L6.25,17.70 L7.58,15.37 L7.46,15.13 L7.34,14.88 L7.24,14.62 L7.14,14.36 L7.06,14.10 L4.47,13.40 L4.47,11.20 L7.06,10.50 L7.14,10.24 L7.24,9.98 L7.34,9.72 L7.46,9.47 L7.58,9.23 L6.25,6.90 L7.80,5.35 L10.13,6.68 L10.37,6.56 L10.62,6.44 L10.88,6.34 L11.14,6.24 L11.40,6.16 L12.10,3.57 L14.30,3.57 L15.00,6.16 L15.26,6.24 L15.52,6.34 L15.78,6.44 L16.03,6.56 L16.27,6.68 L18.60,5.35 L20.15,6.90 L18.82,9.23 L18.94,9.47 L19.06,9.72 L19.16,9.98 L19.26,10.24Z M16.60,12.30 A3.4,3.4 0 1,0 9.80,12.30 A3.4,3.4 0 1,0 16.60,12.30Z M23.00,25.75 L22.40,27.74 L20.80,27.74 L20.20,25.75 L19.95,25.65 L19.72,25.53 L19.49,25.40 L19.27,25.25 L19.06,25.09 L17.03,25.57 L16.23,24.18 L17.66,22.66 L17.62,22.40 L17.60,22.13 L17.60,21.87 L17.62,21.60 L17.66,21.34 L16.23,19.82 L17.03,18.43 L19.06,18.91 L19.27,18.75 L19.49,18.60 L19.72,18.47 L19.95,18.35 L20.20,18.25 L20.80,16.26 L22.40,16.26 L23.00,18.25 L23.25,18.35 L23.48,18.47 L23.71,18.60 L23.93,18.75 L24.14,18.91 L26.17,18.43 L26.97,19.82 L25.54,21.34 L25.58,21.60 L25.60,21.87 L25.60,22.13 L25.58,22.40 L25.54,22.66 L26.97,24.18 L26.17,25.57 L24.14,25.09 L23.93,25.25 L23.71,25.40 L23.48,25.53 L23.25,25.65Z M23.50,22.00 A1.9,1.9 0 1,0 19.70,22.00 A1.9,1.9 0 1,0 23.50,22.00Z" fill="#fff" fill-rule="evenodd"/></svg>
<div class="t" style="left:533px;top:570.29px;font-size:11px;line-height:12.29px;color:#111;font-weight:normal;font-style:normal;">Backup Timeout</div>
<div class="t" style="left:716px;top:570.29px;font-size:11px;line-height:12.29px;color:#111;font-weight:normal;font-style:normal;">20 min</div>
<div class="r" style="left:494px;top:592px;width:677px;height:2px;background:#fbfbfb;"></div>
<svg style="position:absolute;left:496px;top:593.6px" width="33" height="31"><rect x="0.5" y="0.5" width="31" height="30" rx="2.5" fill="#5b80b1" stroke="#6a635d"/><path d="M19.34,10.50 L21.93,11.20 L21.93,13.40 L19.34,14.10 L19.26,14.36 L19.16,14.62 L19.06,14.88 L18.94,15.13 L18.82,15.37 L20.15,17.70 L18.60,19.25 L16.27,17.92 L16.03,18.04 L15.78,18.16 L15.52,18.26 L15.26,18.36 L15.00,18.44 L14.30,21.03 L12.10,21.03 L11.40,18.44 L11.14,18.36 L10.88,18.26 L10.62,18.16 L10.37,18.04 L10.13,17.92 L7.80,19.25 L6.25,17.70 L7.58,15.37 L7.46,15.13 L7.34,14.88 L7.24,14.62 L7.14,14.36 L7.06,14.10 L4.47,13.40 L4.47,11.20 L7.06,10.50 L7.14,10.24 L7.24,9.98 L7.34,9.72 L7.46,9.47 L7.58,9.23 L6.25,6.90 L7.80,5.35 L10.13,6.68 L10.37,6.56 L10.62,6.44 L10.88,6.34 L11.14,6.24 L11.40,6.16 L12.10,3.57 L14.30,3.57 L15.00,6.16 L15.26,6.24 L15.52,6.34 L15.78,6.44 L16.03,6.56 L16.27,6.68 L18.60,5.35 L20.15,6.90 L18.82,9.23 L18.94,9.47 L19.06,9.72 L19.16,9.98 L19.26,10.24Z M16.60,12.30 A3.4,3.4 0 1,0 9.80,12.30 A3.4,3.4 0 1,0 16.60,12.30Z M23.00,25.75 L22.40,27.74 L20.80,27.74 L20.20,25.75 L19.95,25.65 L19.72,25.53 L19.49,25.40 L19.27,25.25 L19.06,25.09 L17.03,25.57 L16.23,24.18 L17.66,22.66 L17.62,22.40 L17.60,22.13 L17.60,21.87 L17.62,21.60 L17.66,21.34 L16.23,19.82 L17.03,18.43 L19.06,18.91 L19.27,18.75 L19.49,18.60 L19.72,18.47 L19.95,18.35 L20.20,18.25 L20.80,16.26 L22.40,16.26 L23.00,18.25 L23.25,18.35 L23.48,18.47 L23.71,18.60 L23.93,18.75 L24.14,18.91 L26.17,18.43 L26.97,19.82 L25.54,21.34 L25.58,21.60 L25.60,21.87 L25.60,22.13 L25.58,22.40 L25.54,22.66 L26.97,24.18 L26.17,25.57 L24.14,25.09 L23.93,25.25 L23.71,25.40 L23.48,25.53 L23.25,25.65Z M23.50,22.00 A1.9,1.9 0 1,0 19.70,22.00 A1.9,1.9 0 1,0 23.50,22.00Z" fill="#fff" fill-rule="evenodd"/></svg>
<div class="t" style="left:533px;top:603.04px;font-size:11px;line-height:12.29px;color:#111;font-weight:normal;font-style:normal;">Maximum number of stored backups</div>
<div class="t" style="left:716px;top:603.04px;font-size:11px;line-height:12.29px;color:#111;font-weight:normal;font-style:normal;">100</div>
<div class="r" style="left:494px;top:624px;width:677px;height:2px;background:#fbfbfb;"></div>
<svg style="position:absolute;left:496px;top:626.35px" width="33" height="31"><rect x="0.5" y="0.5" width="31" height="30" rx="2.5" fill="#5b80b1" stroke="#6a635d"/><path d="M19.34,10.50 L21.93,11.20 L21.93,13.40 L19.34,14.10 L19.26,14.36 L19.16,14.62 L19.06,14.88 L18.94,15.13 L18.82,15.37 L20.15,17.70 L18.60,19.25 L16.27,17.92 L16.03,18.04 L15.78,18.16 L15.52,18.26 L15.26,18.36 L15.00,18.44 L14.30,21.03 L12.10,21.03 L11.40,18.44 L11.14,18.36 L10.88,18.26 L10.62,18.16 L10.37,18.04 L10.13,17.92 L7.80,19.25 L6.25,17.70 L7.58,15.37 L7.46,15.13 L7.34,14.88 L7.24,14.62 L7.14,14.36 L7.06,14.10 L4.47,13.40 L4.47,11.20 L7.06,10.50 L7.14,10.24 L7.24,9.98 L7.34,9.72 L7.46,9.47 L7.58,9.23 L6.25,6.90 L7.80,5.35 L10.13,6.68 L10.37,6.56 L10.62,6.44 L10.88,6.34 L11.14,6.24 L11.40,6.16 L12.10,3.57 L14.30,3.57 L15.00,6.16 L15.26,6.24 L15.52,6.34 L15.78,6.44 L16.03,6.56 L16.27,6.68 L18.60,5.35 L20.15,6.90 L18.82,9.23 L18.94,9.47 L19.06,9.72 L19.16,9.98 L19.26,10.24Z M16.60,12.30 A3.4,3.4 0 1,0 9.80,12.30 A3.4,3.4 0 1,0 16.60,12.30Z M23.00,25.75 L22.40,27.74 L20.80,27.74 L20.20,25.75 L19.95,25.65 L19.72,25.53 L19.49,25.40 L19.27,25.25 L19.06,25.09 L17.03,25.57 L16.23,24.18 L17.66,22.66 L17.62,22.40 L17.60,22.13 L17.60,21.87 L17.62,21.60 L17.66,21.34 L16.23,19.82 L17.03,18.43 L19.06,18.91 L19.27,18.75 L19.49,18.60 L19.72,18.47 L19.95,18.35 L20.20,18.25 L20.80,16.26 L22.40,16.26 L23.00,18.25 L23.25,18.35 L23.48,18.47 L23.71,18.60 L23.93,18.75 L24.14,18.91 L26.17,18.43 L26.97,19.82 L25.54,21.34 L25.58,21.60 L25.60,21.87 L25.60,22.13 L25.58,22.40 L25.54,22.66 L26.97,24.18 L26.17,25.57 L24.14,25.09 L23.93,25.25 L23.71,25.40 L23.48,25.53 L23.25,25.65Z M23.50,22.00 A1.9,1.9 0 1,0 19.70,22.00 A1.9,1.9 0 1,0 23.50,22.00Z" fill="#fff" fill-rule="evenodd"/></svg>
<div class="t" style="left:533px;top:635.79px;font-size:11px;line-height:12.29px;color:#111;font-weight:normal;font-style:normal;">Backup Activity</div>
<div class="r" style="left:494px;top:657px;width:677px;height:2px;background:#fbfbfb;"></div>
<svg style="position:absolute;left:496px;top:659.1px" width="33" height="31"><rect x="0.5" y="0.5" width="31" height="30" rx="2.5" fill="#5b80b1" stroke="#6a635d"/><path d="M19.34,10.50 L21.93,11.20 L21.93,13.40 L19.34,14.10 L19.26,14.36 L19.16,14.62 L19.06,14.88 L18.94,15.13 L18.82,15.37 L20.15,17.70 L18.60,19.25 L16.27,17.92 L16.03,18.04 L15.78,18.16 L15.52,18.26 L15.26,18.36 L15.00,18.44 L14.30,21.03 L12.10,21.03 L11.40,18.44 L11.14,18.36 L10.88,18.26 L10.62,18.16 L10.37,18.04 L10.13,17.92 L7.80,19.25 L6.25,17.70 L7.58,15.37 L7.46,15.13 L7.34,14.88 L7.24,14.62 L7.14,14.36 L7.06,14.10 L4.47,13.40 L4.47,11.20 L7.06,10.50 L7.14,10.24 L7.24,9.98 L7.34,9.72 L7.46,9.47 L7.58,9.23 L6.25,6.90 L7.80,5.35 L10.13,6.68 L10.37,6.56 L10.62,6.44 L10.88,6.34 L11.14,6.24 L11.40,6.16 L12.10,3.57 L14.30,3.57 L15.00,6.16 L15.26,6.24 L15.52,6.34 L15.78,6.44 L16.03,6.56 L16.27,6.68 L18.60,5.35 L20.15,6.90 L18.82,9.23 L18.94,9.47 L19.06,9.72 L19.16,9.98 L19.26,10.24Z M16.60,12.30 A3.4,3.4 0 1,0 9.80,12.30 A3.4,3.4 0 1,0 16.60,12.30Z M23.00,25.75 L22.40,27.74 L20.80,27.74 L20.20,25.75 L19.95,25.65 L19.72,25.53 L19.49,25.40 L19.27,25.25 L19.06,25.09 L17.03,25.57 L16.23,24.18 L17.66,22.66 L17.62,22.40 L17.60,22.13 L17.60,21.87 L17.62,21.60 L17.66,21.34 L16.23,19.82 L17.03,18.43 L19.06,18.91 L19.27,18.75 L19.49,18.60 L19.72,18.47 L19.95,18.35 L20.20,18.25 L20.80,16.26 L22.40,16.26 L23.00,18.25 L23.25,18.35 L23.48,18.47 L23.71,18.60 L23.93,18.75 L24.14,18.91 L26.17,18.43 L26.97,19.82 L25.54,21.34 L25.58,21.60 L25.60,21.87 L25.60,22.13 L25.58,22.40 L25.54,22.66 L26.97,24.18 L26.17,25.57 L24.14,25.09 L23.93,25.25 L23.71,25.40 L23.48,25.53 L23.25,25.65Z M23.50,22.00 A1.9,1.9 0 1,0 19.70,22.00 A1.9,1.9 0 1,0 23.50,22.00Z" fill="#fff" fill-rule="evenodd"/></svg>
<div class="t" style="left:533px;top:668.54px;font-size:11px;line-height:12.29px;color:#111;font-weight:normal;font-style:normal;">Last Successful Backup Date</div>
<div class="t" style="left:716px;top:668.54px;font-size:11px;line-height:12.29px;color:#111;font-weight:normal;font-style:normal;">1/1/1970 1:00:00.000 AM</div>
<div class="r" style="left:494px;top:690px;width:677px;height:2px;background:#fbfbfb;"></div>
<svg style="position:absolute;left:496px;top:691.85px" width="33" height="31"><rect x="0.5" y="0.5" width="31" height="30" rx="2.5" fill="#5b80b1" stroke="#6a635d"/><path d="M19.34,10.50 L21.93,11.20 L21.93,13.40 L19.34,14.10 L19.26,14.36 L19.16,14.62 L19.06,14.88 L18.94,15.13 L18.82,15.37 L20.15,17.70 L18.60,19.25 L16.27,17.92 L16.03,18.04 L15.78,18.16 L15.52,18.26 L15.26,18.36 L15.00,18.44 L14.30,21.03 L12.10,21.03 L11.40,18.44 L11.14,18.36 L10.88,18.26 L10.62,18.16 L10.37,18.04 L10.13,17.92 L7.80,19.25 L6.25,17.70 L7.58,15.37 L7.46,15.13 L7.34,14.88 L7.24,14.62 L7.14,14.36 L7.06,14.10 L4.47,13.40 L4.47,11.20 L7.06,10.50 L7.14,10.24 L7.24,9.98 L7.34,9.72 L7.46,9.47 L7.58,9.23 L6.25,6.90 L7.80,5.35 L10.13,6.68 L10.37,6.56 L10.62,6.44 L10.88,6.34 L11.14,6.24 L11.40,6.16 L12.10,3.57 L14.30,3.57 L15.00,6.16 L15.26,6.24 L15.52,6.34 L15.78,6.44 L16.03,6.56 L16.27,6.68 L18.60,5.35 L20.15,6.90 L18.82,9.23 L18.94,9.47 L19.06,9.72 L19.16,9.98 L19.26,10.24Z M16.60,12.30 A3.4,3.4 0 1,0 9.80,12.30 A3.4,3.4 0 1,0 16.60,12.30Z M23.00,25.75 L22.40,27.74 L20.80,27.74 L20.20,25.75 L19.95,25.65 L19.72,25.53 L19.49,25.40 L19.27,25.25 L19.06,25.09 L17.03,25.57 L16.23,24.18 L17.66,22.66 L17.62,22.40 L17.60,22.13 L17.60,21.87 L17.62,21.60 L17.66,21.34 L16.23,19.82 L17.03,18.43 L19.06,18.91 L19.27,18.75 L19.49,18.60 L19.72,18.47 L19.95,18.35 L20.20,18.25 L20.80,16.26 L22.40,16.26 L23.00,18.25 L23.25,18.35 L23.48,18.47 L23.71,18.60 L23.93,18.75 L24.14,18.91 L26.17,18.43 L26.97,19.82 L25.54,21.34 L25.58,21.60 L25.60,21.87 L25.60,22.13 L25.58,22.40 L25.54,22.66 L26.97,24.18 L26.17,25.57 L24.14,25.09 L23.93,25.25 L23.71,25.40 L23.48,25.53 L23.25,25.65Z M23.50,22.00 A1.9,1.9 0 1,0 19.70,22.00 A1.9,1.9 0 1,0 23.50,22.00Z" fill="#fff" fill-rule="evenodd"/></svg>
<div class="t" style="left:533px;top:701.29px;font-size:11px;line-height:12.29px;color:#111;font-weight:normal;font-style:normal;">Emergency Mode</div>
<div class="t" style="left:716px;top:701.29px;font-size:11px;line-height:12.29px;color:#111;font-weight:normal;font-style:normal;">False</div>
<div class="r" style="left:494px;top:723px;width:677px;height:2px;background:#fbfbfb;"></div>
<svg style="position:absolute;left:496px;top:724.6px" width="33" height="31"><rect x="0.5" y="0.5" width="31" height="30" rx="2.5" fill="#5b80b1" stroke="#6a635d"/><path d="M24.65,12.80 L28.20,13.70 L28.20,16.90 L24.65,17.80 L24.53,18.18 L24.39,18.56 L24.24,18.93 L24.07,19.29 L23.88,19.65 L25.75,22.79 L23.49,25.05 L20.35,23.18 L19.99,23.37 L19.63,23.54 L19.26,23.69 L18.88,23.83 L18.50,23.95 L17.60,27.50 L14.40,27.50 L13.50,23.95 L13.12,23.83 L12.74,23.69 L12.37,23.54 L12.01,23.37 L11.65,23.18 L8.51,25.05 L6.25,22.79 L8.12,19.65 L7.93,19.29 L7.76,18.93 L7.61,18.56 L7.47,18.18 L7.35,17.80 L3.80,16.90 L3.80,13.70 L7.35,12.80 L7.47,12.42 L7.61,12.04 L7.76,11.67 L7.93,11.31 L8.12,10.95 L6.25,7.81 L8.51,5.55 L11.65,7.42 L12.01,7.23 L12.37,7.06 L12.74,6.91 L13.12,6.77 L13.50,6.65 L14.40,3.10 L17.60,3.10 L18.50,6.65 L18.88,6.77 L19.26,6.91 L19.63,7.06 L19.99,7.23 L20.35,7.42 L23.49,5.55 L25.75,7.81 L23.88,10.95 L24.07,11.31 L24.24,11.67 L24.39,12.04 L24.53,12.42Z M21.50,15.30 A5.5,5.5 0 1,0 10.50,15.30 A5.5,5.5 0 1,0 21.50,15.30Z" fill="#fff" fill-rule="evenodd"/></svg>
<div class="t" style="left:533px;top:734.04px;font-size:11px;line-height:12.29px;color:#111;font-weight:normal;font-style:normal;">Emergency Mode Memory Limit</div>
<div class="t" style="left:716px;top:734.04px;font-size:11px;line-height:12.29px;color:#111;font-weight:normal;font-style:normal;">2,097,152 kB</div>
<div class="r" style="left:494px;top:755px;width:677px;height:2px;background:#fbfbfb;"></div>
<svg style="position:absolute;left:496px;top:757.35px" width="33" height="31"><rect x="0.5" y="0.5" width="31" height="30" rx="2.5" fill="#5b80b1" stroke="#6a635d"/><path d="M19.34,10.50 L21.93,11.20 L21.93,13.40 L19.34,14.10 L19.26,14.36 L19.16,14.62 L19.06,14.88 L18.94,15.13 L18.82,15.37 L20.15,17.70 L18.60,19.25 L16.27,17.92 L16.03,18.04 L15.78,18.16 L15.52,18.26 L15.26,18.36 L15.00,18.44 L14.30,21.03 L12.10,21.03 L11.40,18.44 L11.14,18.36 L10.88,18.26 L10.62,18.16 L10.37,18.04 L10.13,17.92 L7.80,19.25 L6.25,17.70 L7.58,15.37 L7.46,15.13 L7.34,14.88 L7.24,14.62 L7.14,14.36 L7.06,14.10 L4.47,13.40 L4.47,11.20 L7.06,10.50 L7.14,10.24 L7.24,9.98 L7.34,9.72 L7.46,9.47 L7.58,9.23 L6.25,6.90 L7.80,5.35 L10.13,6.68 L10.37,6.56 L10.62,6.44 L10.88,6.34 L11.14,6.24 L11.40,6.16 L12.10,3.57 L14.30,3.57 L15.00,6.16 L15.26,6.24 L15.52,6.34 L15.78,6.44 L16.03,6.56 L16.27,6.68 L18.60,5.35 L20.15,6.90 L18.82,9.23 L18.94,9.47 L19.06,9.72 L19.16,9.98 L19.26,10.24Z M16.60,12.30 A3.4,3.4 0 1,0 9.80,12.30 A3.4,3.4 0 1,0 16.60,12.30Z M23.00,25.75 L22.40,27.74 L20.80,27.74 L20.20,25.75 L19.95,25.65 L19.72,25.53 L19.49,25.40 L19.27,25.25 L19.06,25.09 L17.03,25.57 L16.23,24.18 L17.66,22.66 L17.62,22.40 L17.60,22.13 L17.60,21.87 L17.62,21.60 L17.66,21.34 L16.23,19.82 L17.03,18.43 L19.06,18.91 L19.27,18.75 L19.49,18.60 L19.72,18.47 L19.95,18.35 L20.20,18.25 L20.80,16.26 L22.40,16.26 L23.00,18.25 L23.25,18.35 L23.48,18.47 L23.71,18.60 L23.93,18.75 L24.14,18.91 L26.17,18.43 L26.97,19.82 L25.54,21.34 L25.58,21.60 L25.60,21.87 L25.60,22.13 L25.58,22.40 L25.54,22.66 L26.97,24.18 L26.17,25.57 L24.14,25.09 L23.93,25.25 L23.71,25.40 L23.48,25.53 L23.25,25.65Z M23.50,22.00 A1.9,1.9 0 1,0 19.70,22.00 A1.9,1.9 0 1,0 23.50,22.00Z" fill="#fff" fill-rule="evenodd"/></svg>
<div class="t" style="left:533px;top:766.79px;font-size:11px;line-height:12.29px;color:#111;font-weight:normal;font-style:normal;">Free Virtual Memory</div>
<div class="t" style="left:716px;top:766.79px;font-size:11px;line-height:12.29px;color:#111;font-weight:normal;font-style:normal;">12,237,172 kB</div>
<div class="r" style="left:494px;top:788px;width:677px;height:2px;background:#fbfbfb;"></div>
<svg style="position:absolute;left:496px;top:790.1px" width="33" height="31"><rect x="0.5" y="0.5" width="31" height="30" rx="2.5" fill="#5b80b1" stroke="#6a635d"/><path d="M19.34,10.50 L21.93,11.20 L21.93,13.40 L19.34,14.10 L19.26,14.36 L19.16,14.62 L19.06,14.88 L18.94,15.13 L18.82,15.37 L20.15,17.70 L18.60,19.25 L16.27,17.92 L16.03,18.04 L15.78,18.16 L15.52,18.26 L15.26,18.36 L15.00,18.44 L14.30,21.03 L12.10,21.03 L11.40,18.44 L11.14,18.36 L10.88,18.26 L10.62,18.16 L10.37,18.04 L10.13,17.92 L7.80,19.25 L6.25,17.70 L7.58,15.37 L7.46,15.13 L7.34,14.88 L7.24,14.62 L7.14,14.36 L7.06,14.10 L4.47,13.40 L4.47,11.20 L7.06,10.50 L7.14,10.24 L7.24,9.98 L7.34,9.72 L7.46,9.47 L7.58,9.23 L6.25,6.90 L7.80,5.35 L10.13,6.68 L10.37,6.56 L10.62,6.44 L10.88,6.34 L11.14,6.24 L11.40,6.16 L12.10,3.57 L14.30,3.57 L15.00,6.16 L15.26,6.24 L15.52,6.34 L15.78,6.44 L16.03,6.56 L16.27,6.68 L18.60,5.35 L20.15,6.90 L18.82,9.23 L18.94,9.47 L19.06,9.72 L19.16,9.98 L19.26,10.24Z M16.60,12.30 A3.4,3.4 0 1,0 9.80,12.30 A3.4,3.4 0 1,0 16.60,12.30Z M23.00,25.75 L22.40,27.74 L20.80,27.74 L20.20,25.75 L19.95,25.65 L19.72,25.53 L19.49,25.40 L19.27,25.25 L19.06,25.09 L17.03,25.57 L16.23,24.18 L17.66,22.66 L17.62,22.40 L17.60,22.13 L17.60,21.87 L17.62,21.60 L17.66,21.34 L16.23,19.82 L17.03,18.43 L19.06,18.91 L19.27,18.75 L19.49,18.60 L19.72,18.47 L19.95,18.35 L20.20,18.25 L20.80,16.26 L22.40,16.26 L23.00,18.25 L23.25,18.35 L23.48,18.47 L23.71,18.60 L23.93,18.75 L24.14,18.91 L26.17,18.43 L26.97,19.82 L25.54,21.34 L25.58,21.60 L25.60,21.87 L25.60,22.13 L25.58,22.40 L25.54,22.66 L26.97,24.18 L26.17,25.57 L24.14,25.09 L23.93,25.25 L23.71,25.40 L23.48,25.53 L23.25,25.65Z M23.50,22.00 A1.9,1.9 0 1,0 19.70,22.00 A1.9,1.9 0 1,0 23.50,22.00Z" fill="#fff" fill-rule="evenodd"/></svg>
<div class="t" style="left:533px;top:799.54px;font-size:11px;line-height:12.29px;color:#111;font-weight:normal;font-style:normal;">Services running properly</div>
<div class="t" style="left:716px;top:799.54px;font-size:11px;line-height:12.29px;color:#111;font-weight:normal;font-style:normal;">True</div>
<div class="r" style="left:494px;top:821px;width:677px;height:2px;background:#fbfbfb;"></div>
<svg style="position:absolute;left:496px;top:822.85px" width="33" height="31"><rect x="0.5" y="0.5" width="31" height="30" rx="2.5" fill="#5b80b1" stroke="#6a635d"/><path d="M19.34,10.50 L21.93,11.20 L21.93,13.40 L19.34,14.10 L19.26,14.36 L19.16,14.62 L19.06,14.88 L18.94,15.13 L18.82,15.37 L20.15,17.70 L18.60,19.25 L16.27,17.92 L16.03,18.04 L15.78,18.16 L15.52,18.26 L15.26,18.36 L15.00,18.44 L14.30,21.03 L12.10,21.03 L11.40,18.44 L11.14,18.36 L10.88,18.26 L10.62,18.16 L10.37,18.04 L10.13,17.92 L7.80,19.25 L6.25,17.70 L7.58,15.37 L7.46,15.13 L7.34,14.88 L7.24,14.62 L7.14,14.36 L7.06,14.10 L4.47,13.40 L4.47,11.20 L7.06,10.50 L7.14,10.24 L7.24,9.98 L7.34,9.72 L7.46,9.47 L7.58,9.23 L6.25,6.90 L7.80,5.35 L10.13,6.68 L10.37,6.56 L10.62,6.44 L10.88,6.34 L11.14,6.24 L11.40,6.16 L12.10,3.57 L14.30,3.57 L15.00,6.16 L15.26,6.24 L15.52,6.34 L15.78,6.44 L16.03,6.56 L16.27,6.68 L18.60,5.35 L20.15,6.90 L18.82,9.23 L18.94,9.47 L19.06,9.72 L19.16,9.98 L19.26,10.24Z M16.60,12.30 A3.4,3.4 0 1,0 9.80,12.30 A3.4,3.4 0 1,0 16.60,12.30Z M23.00,25.75 L22.40,27.74 L20.80,27.74 L20.20,25.75 L19.95,25.65 L19.72,25.53 L19.49,25.40 L19.27,25.25 L19.06,25.09 L17.03,25.57 L16.23,24.18 L17.66,22.66 L17.62,22.40 L17.60,22.13 L17.60,21.87 L17.62,21.60 L17.66,21.34 L16.23,19.82 L17.03,18.43 L19.06,18.91 L19.27,18.75 L19.49,18.60 L19.72,18.47 L19.95,18.35 L20.20,18.25 L20.80,16.26 L22.40,16.26 L23.00,18.25 L23.25,18.35 L23.48,18.47 L23.71,18.60 L23.93,18.75 L24.14,18.91 L26.17,18.43 L26.97,19.82 L25.54,21.34 L25.58,21.60 L25.60,21.87 L25.60,22.13 L25.58,22.40 L25.54,22.66 L26.97,24.18 L26.17,25.57 L24.14,25.09 L23.93,25.25 L23.71,25.40 L23.48,25.53 L23.25,25.65Z M23.50,22.00 A1.9,1.9 0 1,0 19.70,22.00 A1.9,1.9 0 1,0 23.50,22.00Z" fill="#fff" fill-rule="evenodd"/></svg>
<div class="t" style="left:533px;top:832.29px;font-size:11px;line-height:12.29px;color:#111;font-weight:normal;font-style:normal;">Transaction Mode</div>
<div class="t" style="left:716px;top:832.29px;font-size:11px;line-height:12.29px;color:#111;font-weight:normal;font-style:normal;">Simple</div>
<div class="r" style="left:494px;top:854px;width:677px;height:2px;background:#fbfbfb;"></div>
<svg style="position:absolute;left:496px;top:855.6px" width="33" height="31"><rect x="0.5" y="0.5" width="31" height="30" rx="2.5" fill="#5b80b1" stroke="#6a635d"/><path d="M19.34,10.50 L21.93,11.20 L21.93,13.40 L19.34,14.10 L19.26,14.36 L19.16,14.62 L19.06,14.88 L18.94,15.13 L18.82,15.37 L20.15,17.70 L18.60,19.25 L16.27,17.92 L16.03,18.04 L15.78,18.16 L15.52,18.26 L15.26,18.36 L15.00,18.44 L14.30,21.03 L12.10,21.03 L11.40,18.44 L11.14,18.36 L10.88,18.26 L10.62,18.16 L10.37,18.04 L10.13,17.92 L7.80,19.25 L6.25,17.70 L7.58,15.37 L7.46,15.13 L7.34,14.88 L7.24,14.62 L7.14,14.36 L7.06,14.10 L4.47,13.40 L4.47,11.20 L7.06,10.50 L7.14,10.24 L7.24,9.98 L7.34,9.72 L7.46,9.47 L7.58,9.23 L6.25,6.90 L7.80,5.35 L10.13,6.68 L10.37,6.56 L10.62,6.44 L10.88,6.34 L11.14,6.24 L11.40,6.16 L12.10,3.57 L14.30,3.57 L15.00,6.16 L15.26,6.24 L15.52,6.34 L15.78,6.44 L16.03,6.56 L16.27,6.68 L18.60,5.35 L20.15,6.90 L18.82,9.23 L18.94,9.47 L19.06,9.72 L19.16,9.98 L19.26,10.24Z M16.60,12.30 A3.4,3.4 0 1,0 9.80,12.30 A3.4,3.4 0 1,0 16.60,12.30Z M23.00,25.75 L22.40,27.74 L20.80,27.74 L20.20,25.75 L19.95,25.65 L19.72,25.53 L19.49,25.40 L19.27,25.25 L19.06,25.09 L17.03,25.57 L16.23,24.18 L17.66,22.66 L17.62,22.40 L17.60,22.13 L17.60,21.87 L17.62,21.60 L17.66,21.34 L16.23,19.82 L17.03,18.43 L19.06,18.91 L19.27,18.75 L19.49,18.60 L19.72,18.47 L19.95,18.35 L20.20,18.25 L20.80,16.26 L22.40,16.26 L23.00,18.25 L23.25,18.35 L23.48,18.47 L23.71,18.60 L23.93,18.75 L24.14,18.91 L26.17,18.43 L26.97,19.82 L25.54,21.34 L25.58,21.60 L25.60,21.87 L25.60,22.13 L25.58,22.40 L25.54,22.66 L26.97,24.18 L26.17,25.57 L24.14,25.09 L23.93,25.25 L23.71,25.40 L23.48,25.53 L23.25,25.65Z M23.50,22.00 A1.9,1.9 0 1,0 19.70,22.00 A1.9,1.9 0 1,0 23.50,22.00Z" fill="#fff" fill-rule="evenodd"/></svg>
<div class="r" style="left:865px;top:300px;width:70px;height:14px;background:#a0a3a4;"></div>
<svg style="position:absolute;left:928px;top:307px" width="7" height="7"><path d="M7,1 V7 H1Z" fill="#6c6c6c"/></svg>
<div class="t" style="left:865px;top:300px;width:70px;height:14px;line-height:14px;text-align:center;font-size:11px;color:#fff;">Enable</div>
<div class="r" style="left:939px;top:300px;width:70px;height:14px;background:#a0a3a4;"></div>
<div class="t" style="left:939px;top:300px;width:70px;height:14px;line-height:14px;text-align:center;font-size:11px;color:#fff;">Disable</div>
<div class="r" style="left:1013px;top:300px;width:70px;height:14px;background:#a0a3a4;"></div>
<svg style="position:absolute;left:1076px;top:307px" width="7" height="7"><path d="M7,1 V7 H1Z" fill="#6c6c6c"/></svg>
<div class="t" style="left:1013px;top:300px;width:70px;height:14px;line-height:14px;text-align:center;font-size:11px;color:#fff;">Enable All</div>
<div class="r" style="left:1087px;top:300px;width:70px;height:14px;background:#a0a3a4;"></div>
<div class="t" style="left:1087px;top:300px;width:70px;height:14px;line-height:14px;text-align:center;font-size:11px;color:#fff;">Disable All</div>
<div class="r" style="left:939px;top:430px;width:144px;height:14px;background:#fff;border:1px solid #777;box-shadow:inset 1px 1px 0 #bbb;"></div>
<div class="r" style="left:1065px;top:430px;width:18px;height:14px;background:#a5a9ab;"></div>
<svg style="position:absolute;left:1068px;top:432px" width="12" height="10"><path d="M1,1 L11,1 L6,9Z" fill="#fff"/></svg>
<div class="r" style="left:1087px;top:430px;width:70px;height:14px;background:#cfd3d4;"></div>
<div class="t" style="left:1087px;top:430px;width:70px;height:14px;line-height:14px;text-align:center;font-size:11px;color:#fff;">Apply</div>
<div class="r" style="left:939px;top:496px;width:144px;height:14px;background:#fff;border:1px solid #777;box-shadow:inset 1px 1px 0 #bbb;"></div>
<div class="r" style="left:1087px;top:496px;width:70px;height:14px;background:#a0a3a4;"></div>
<div class="t" style="left:1087px;top:496px;width:70px;height:14px;line-height:14px;text-align:center;font-size:11px;color:#fff;">Apply</div>
<div class="r" style="left:1013px;top:528px;width:70px;height:14px;background:#a0a3a4;"></div>
<div class="t" style="left:1013px;top:528px;width:70px;height:14px;line-height:14px;text-align:center;font-size:11px;color:#fff;">Start</div>
<div class="r" style="left:1087px;top:528px;width:70px;height:14px;background:#cfd3d4;"></div>
<div class="t" style="left:1087px;top:528px;width:70px;height:14px;line-height:14px;text-align:center;font-size:11px;color:#fff;">Cancel</div>
<div class="r" style="left:943px;top:565px;width:65px;height:7px;background:#fafafa;"></div>
<div class="r" style="left:939px;top:565px;width:4px;height:7px;background:#6a6a6a;"></div>
<div class="r" style="left:1013px;top:561px;width:70px;height:14px;background:#fff;border:1px solid #777;box-shadow:inset 1px 1px 0 #bbb;"></div>
<div class="r" style="left:1087px;top:561px;width:70px;height:14px;background:#cfd3d4;"></div>
<div class="t" style="left:1087px;top:561px;width:70px;height:14px;line-height:14px;text-align:center;font-size:11px;color:#fff;">Apply</div>
<div class="r" style="left:939px;top:594px;width:144px;height:14px;background:#fff;border:1px solid #777;box-shadow:inset 1px 1px 0 #bbb;"></div>
<div class="r" style="left:1087px;top:594px;width:70px;height:14px;background:#cfd3d4;"></div>
<div class="t" style="left:1087px;top:594px;width:70px;height:14px;line-height:14px;text-align:center;font-size:11px;color:#fff;">Apply</div>
<div class="r" style="left:939px;top:725px;width:144px;height:14px;background:#fff;border:1px solid #777;box-shadow:inset 1px 1px 0 #bbb;"></div>
<div class="r" style="left:1087px;top:725px;width:70px;height:14px;background:#cfd3d4;"></div>
<div class="t" style="left:1087px;top:725px;width:70px;height:14px;line-height:14px;text-align:center;font-size:11px;color:#fff;">Apply</div>
<div class="r" style="left:939px;top:823px;width:144px;height:14px;background:#fff;border:1px solid #777;box-shadow:inset 1px 1px 0 #bbb;"></div>
<div class="r" style="left:1065px;top:823px;width:18px;height:14px;background:#a5a9ab;"></div>
<svg style="position:absolute;left:1068px;top:825px" width="12" height="10"><path d="M1,1 L11,1 L6,9Z" fill="#fff"/></svg>
<div class="t" style="left:943px;top:824.04px;font-size:11px;line-height:12.29px;color:#111;font-weight:normal;font-style:normal;">Simple</div>
<div class="r" style="left:1087px;top:823px;width:70px;height:14px;background:#a0a3a4;"></div>
<div class="t" style="left:1087px;top:823px;width:70px;height:14px;line-height:14px;text-align:center;font-size:11px;color:#fff;">Set</div>
<div class="r" style="left:484px;top:864px;width:705px;height:7px;background:#fff;"></div>
<div class="r" style="left:1171px;top:264px;width:14px;height:600px;background:#fff;"></div>
<div class="r" style="left:1174px;top:277px;width:8px;height:318px;background:#9d9fa0;"></div>
<div class="r" style="left:1174px;top:595px;width:8px;height:258px;background:#d6e0e2;"></div>
<svg style="position:absolute;left:1174px;top:267px" width="9" height="6"><path d="M1,4.5 L4.5,1 L8,4.5Z" fill="#888"/></svg>
<svg style="position:absolute;left:1174px;top:856px" width="9" height="6"><path d="M0.5,0.5 L4.5,5 L8.5,0.5Z" fill="#888"/></svg>
<div class="r" style="left:486px;top:688px;width:689px;height:104px;border:2px solid #ea3235;box-shadow:1px 3px 4px rgba(0,0,0,0.28), inset 2px 2px 3px rgba(0,0,0,0.14);"></div>
</body></html>
